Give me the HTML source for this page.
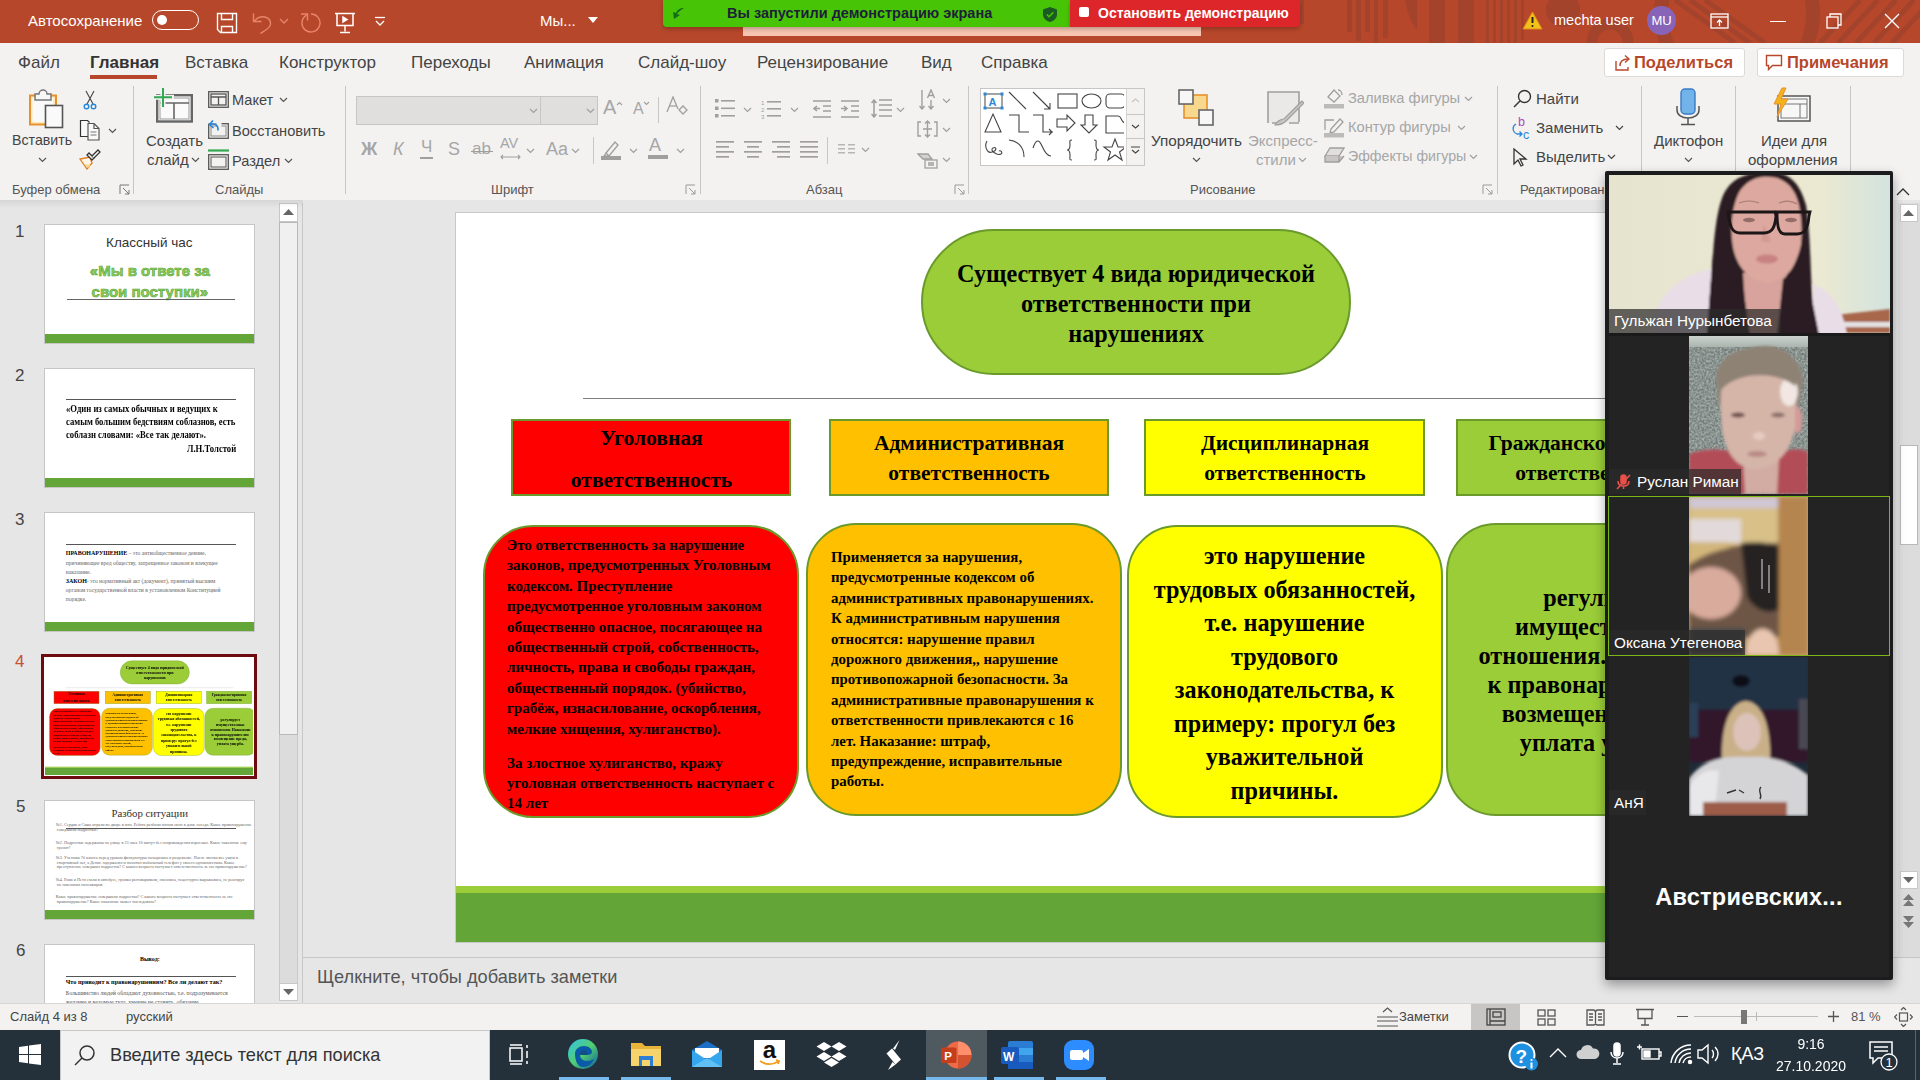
<!DOCTYPE html>
<html><head><meta charset="utf-8">
<style>
*{margin:0;padding:0;box-sizing:border-box}
html,body{width:1920px;height:1080px;overflow:hidden;background:#e6e6e6;font-family:"Liberation Sans",sans-serif;color:#444}
.a{position:absolute}
.ser{font-family:"Liberation Serif",serif;font-weight:bold;color:#000}
#title{left:0;top:0;width:1920px;height:43px;background:#b7472a;color:#fff}
#tabs{left:0;top:43px;width:1920px;height:39px;background:#f3f2f1}
#ribbon{left:0;top:82px;width:1920px;height:118px;background:#f3f2f1}
.tab{position:absolute;top:53px;font-size:17px;color:#444;white-space:nowrap}
.rt{position:absolute;font-size:15px;color:#444;white-space:nowrap}
.gl{position:absolute;top:182px;font-size:13px;color:#555;white-space:nowrap}
.sep{position:absolute;top:86px;width:1px;height:108px;background:#c8c6c4}
.dis{color:#a6a6a6}
</style></head><body>
<!-- TITLE BAR -->
<div id="title" class="a">
  <svg class="a" style="left:1290px;top:0" width="630" height="43" viewBox="0 0 630 43">
    <g fill="#a4432c">
      <rect x="10" y="0" width="4" height="24"/>
      <rect x="57" y="0" width="5" height="32"/><rect x="66" y="0" width="5" height="41"/><rect x="75" y="0" width="5" height="32"/><rect x="84" y="0" width="4" height="43"/><rect x="93" y="0" width="5" height="38"/>
      <path d="M115 0h12v30c-6-8-10-18-12-30z"/>
      <rect x="139" y="0" width="16" height="43"/><rect x="168" y="0" width="16" height="43"/>
      <rect x="196" y="0" width="3" height="43"/><rect x="203" y="0" width="3" height="43"/><rect x="210" y="0" width="3" height="43"/><rect x="217" y="0" width="3" height="43"/><rect x="224" y="0" width="3" height="43"/><rect x="231" y="0" width="3" height="40"/>
      <circle cx="273" cy="10" r="17"/>
    </g>
    <g fill="none" stroke="#a4432c">
      <circle cx="320" cy="42" r="18" stroke-width="11"/>
      <circle cx="447" cy="14" r="76" stroke-width="14"/>
      <path d="M385 0l60 43M400 0l60 43M415 0l60 43" stroke-width="5"/>
      <path d="M530 43l40-43M548 43l40-43M566 43l40-43M584 43l40-43M602 43l30-32" stroke-width="5"/>
    </g>
  </svg>
  <div class="a" style="left:28px;top:12px;font-size:15px;color:#fff">Автосохранение</div>
  <div class="a" style="left:152px;top:10px;width:47px;height:20px;border:1.3px solid #fff;border-radius:10px"></div>
  <div class="a" style="left:156.5px;top:15px;width:10px;height:10px;border-radius:50%;background:#fff"></div>
  <svg class="a" style="left:216px;top:12px" width="22" height="22" viewBox="0 0 22 22" fill="none" stroke="#fff" stroke-width="1.4"><path d="M1.5 1.5h19v19h-16l-3-3z"/><path d="M5.5 1.5v6h11v-6"/><path d="M5.5 20.5v-6h11v6"/></svg>
  <svg class="a" style="left:252px;top:12px" width="22" height="22" viewBox="0 0 22 22" fill="none" stroke="#e7866d" stroke-width="1.4"><path d="M1.5 1.5v8h8"/><path d="M2 9.5C8 2 19 4 18.5 12.5C18 16 14 18 8.5 21.5"/></svg>
  <svg class="a" style="left:279px;top:18px" width="10" height="7" viewBox="0 0 10 7" fill="none" stroke="#e7866d" stroke-width="1.3"><path d="M1 1l4 4 4-4"/></svg>
  <svg class="a" style="left:299px;top:12px" width="22" height="22" viewBox="0 0 22 22" fill="none" stroke="#e7866d" stroke-width="1.4"><path d="M2 2h6.5v6.5"/><path d="M7.5 3.2A9 9 0 1 0 12 2"/></svg>
  <svg class="a" style="left:334px;top:12px" width="22" height="22" viewBox="0 0 22 22" fill="none" stroke="#fff" stroke-width="1.5"><path d="M1 1.5h20"/><path d="M3 1.5v12h16v-12"/><path d="M11 13.5v6"/><path d="M6 20.5h10"/><path d="M9 5v5l4-2.5z" fill="#fff"/></svg>
  <svg class="a" style="left:373px;top:16px" width="14" height="12" viewBox="0 0 14 12" fill="none" stroke="#fff" stroke-width="1.3"><path d="M2 1.5h10"/><path d="M3 5l4 4 4-4"/></svg>
  <div class="a" style="left:540px;top:12px;font-size:15px;color:#fff">Мы...</div>
  <svg class="a" style="left:588px;top:17px" width="10" height="6"><path d="M0 0h10l-5 6z" fill="#fff"/></svg>
  <div class="a" style="left:743px;top:25px;width:458px;height:11px;background:#f7c6b2"></div>
  <div class="a" style="left:663px;top:0;width:407px;height:27px;background:#48c406;border-radius:0 0 0 4px;box-shadow:0 2px 4px rgba(0,0,0,.25)"></div>
  <svg class="a" style="left:671px;top:7px" width="14" height="13" viewBox="0 0 14 13"><path d="M13 1c-4 0-7 2-8 5l-3-1 1 7 6-4-3-1c1-2 4-4 7-6z" fill="#146c1a"/></svg>
  <div class="a" style="left:727px;top:5px;font-size:14.5px;font-weight:bold;color:#1d1f3a">Вы запустили демонстрацию экрана</div>
  <svg class="a" style="left:1043px;top:7px" width="14" height="15" viewBox="0 0 14 15"><path d="M7 0l7 2.5v5c0 3.5-3 6.5-7 7.5-4-1-7-4-7-7.5v-5z" fill="#1b5a22"/><path d="M3.8 7.5l2.2 2.2 4.3-4.3" stroke="#48c406" stroke-width="1.5" fill="none"/></svg>
  <div class="a" style="left:1070px;top:0;width:230px;height:27px;background:#dc2629;border-radius:0 0 4px 0;box-shadow:0 2px 4px rgba(0,0,0,.25)"></div>
  <div class="a" style="left:1079px;top:7px;width:10px;height:10px;background:#fff;border-radius:2px"></div>
  <div class="a" style="left:1098px;top:5px;font-size:14px;font-weight:bold;color:#fff">Остановить демонстрацию</div>
  <svg class="a" style="left:1522px;top:11px" width="21" height="19" viewBox="0 0 21 19"><path d="M10.5 1l9.5 17h-19z" fill="#f2c11a" stroke="#e38a1c" stroke-width="1"/><path d="M10.5 6v6" stroke="#222" stroke-width="2"/><circle cx="10.5" cy="15" r="1.1" fill="#222"/></svg>
  <div class="a" style="left:1554px;top:12px;font-size:14.5px;color:#fff">mechta user</div>
  <div class="a" style="left:1647px;top:6px;width:29px;height:29px;border-radius:50%;background:#8764b8;color:#fff;font-size:13px;line-height:29px;text-align:center">MU</div>
  <svg class="a" style="left:1710px;top:13px" width="19" height="16" viewBox="0 0 19 16" fill="none" stroke="#fff" stroke-width="1.3"><rect x="1" y="1" width="17" height="14"/><path d="M1 4h17"/><path d="M9.5 13V7M7 9.5l2.5-2.5 2.5 2.5"/></svg>
  <div class="a" style="left:1770px;top:21px;width:16px;height:1.3px;background:#fff"></div>
  <svg class="a" style="left:1826px;top:13px" width="16" height="16" viewBox="0 0 16 16" fill="none" stroke="#fff" stroke-width="1.3"><rect x="1" y="4" width="11" height="11"/><path d="M4 4V1h11v11h-3"/></svg>
  <svg class="a" style="left:1884px;top:13px" width="16" height="16" viewBox="0 0 16 16" stroke="#fff" stroke-width="1.4"><path d="M1 1l14 14M15 1L1 15"/></svg>
</div>
<!-- TABS -->
<div id="tabs" class="a"></div>
<div class="tab" style="left:18px">Файл</div>
<div class="tab" style="left:90px;font-weight:bold;color:#333">Главная</div>
<div class="a" style="left:90px;top:75px;width:67px;height:4px;background:#b7472a"></div>
<div class="tab" style="left:185px">Вставка</div>
<div class="tab" style="left:279px">Конструктор</div>
<div class="tab" style="left:411px">Переходы</div>
<div class="tab" style="left:524px">Анимация</div>
<div class="tab" style="left:638px">Слайд-шоу</div>
<div class="tab" style="left:757px">Рецензирование</div>
<div class="tab" style="left:921px">Вид</div>
<div class="tab" style="left:981px">Справка</div>
<!-- RIBBON -->
<div id="ribbon" class="a"></div>
<!-- RIBBON CONTENT -->
<div id="rb" class="a" style="left:0;top:0;width:1920px;height:200px">
<!-- share / comments -->
<div class="a" style="left:1604px;top:48px;width:141px;height:29px;background:#fff;border:1px solid #dcdad8;border-radius:3px"></div>
<svg class="a" style="left:1613px;top:53px" width="19" height="19" viewBox="0 0 19 19" fill="none" stroke="#b7472a" stroke-width="1.4"><path d="M3 8v9h12v-3"/><path d="M7 13c0-5 3-7 8-7"/><path d="M12 2.5l4 3.5-4 3.5"/></svg>
<div class="a" style="left:1634px;top:52.5px;font-size:16.5px;font-weight:bold;color:#b7472a">Поделиться</div>
<div class="a" style="left:1757px;top:48px;width:147px;height:29px;background:#fff;border:1px solid #dcdad8;border-radius:3px"></div>
<svg class="a" style="left:1765px;top:54px" width="18" height="17" viewBox="0 0 18 17" fill="none" stroke="#b7472a" stroke-width="1.4"><path d="M1.5 1.5h15v10h-9l-4 4v-4h-2z"/></svg>
<div class="a" style="left:1787px;top:52.5px;font-size:16.5px;font-weight:bold;color:#b7472a">Примечания</div>

<!-- separators -->
<div class="sep" style="left:133px"></div>
<div class="sep" style="left:345px"></div>
<div class="sep" style="left:700px"></div>
<div class="sep" style="left:968px"></div>
<div class="sep" style="left:1497px"></div>
<div class="sep" style="left:1641px"></div>
<div class="sep" style="left:1735px"></div>
<div class="sep" style="left:1850px"></div>

<!-- group labels -->
<div class="gl" style="left:12px">Буфер обмена</div>
<div class="gl" style="left:215px">Слайды</div>
<div class="gl" style="left:491px">Шрифт</div>
<div class="gl" style="left:806px">Абзац</div>
<div class="gl" style="left:1190px">Рисование</div>
<div class="gl" style="left:1520px">Редактирование</div>
<!-- dialog launchers -->
<svg class="a" style="left:119px;top:184px" width="11" height="11" viewBox="0 0 11 11" fill="none" stroke="#777" stroke-width="1"><path d="M1 10V1h9"/><path d="M4 4l6 6M10 6v4H6"/></svg>
<svg class="a" style="left:685px;top:184px" width="11" height="11" viewBox="0 0 11 11" fill="none" stroke="#999" stroke-width="1"><path d="M1 10V1h9"/><path d="M4 4l6 6M10 6v4H6"/></svg>
<svg class="a" style="left:954px;top:184px" width="11" height="11" viewBox="0 0 11 11" fill="none" stroke="#999" stroke-width="1"><path d="M1 10V1h9"/><path d="M4 4l6 6M10 6v4H6"/></svg>
<svg class="a" style="left:1482px;top:184px" width="11" height="11" viewBox="0 0 11 11" fill="none" stroke="#999" stroke-width="1"><path d="M1 10V1h9"/><path d="M4 4l6 6M10 6v4H6"/></svg>

<!-- CLIPBOARD -->
<svg class="a" style="left:28px;top:89px" width="37" height="41" viewBox="0 0 37 41">
  <rect x="2" y="6.5" width="26" height="29" fill="#fde8b4" stroke="#e8912c" stroke-width="2"/>
  <rect x="4.5" y="8.5" width="21" height="24.5" fill="#f9f9f9"/>
  <path d="M7 11V5h4a4 4 0 0 1 8 0h4v6z" fill="#f7f7f7" stroke="#777" stroke-width="1.5"/>
  <rect x="17.5" y="16.5" width="17" height="22" fill="#fafafa" stroke="#555" stroke-width="1.6"/>
</svg>
<div class="rt" style="left:12px;top:132px;font-size:14.2px">Вставить</div>
<svg class="a" style="left:38px;top:157px" width="9" height="6" viewBox="0 0 9 6" fill="none" stroke="#555" stroke-width="1.2"><path d="M1 1l3.5 3.5L8 1"/></svg>
<svg class="a" style="left:83px;top:90px" width="14" height="20" viewBox="0 0 14 20" fill="none"><path d="M3 1l7 13M11 1L4 14" stroke="#444" stroke-width="1.1"/><circle cx="3.5" cy="16.5" r="2.3" stroke="#2b88d8" stroke-width="1.4"/><circle cx="10.5" cy="16.5" r="2.3" stroke="#2b88d8" stroke-width="1.4"/></svg>
<svg class="a" style="left:79px;top:119px" width="22" height="22" viewBox="0 0 22 22" fill="#f9f9f9" stroke="#333" stroke-width="1.2"><path d="M9 17.5H1.5v-16h7l2 2"/><path d="M9 4.5h6l5 5v11.5H9z" stroke="#555"/><path d="M15 4.5v5h5" fill="none" stroke="#555"/><path d="M11.5 13h6M11.5 16h6" stroke="#777"/></svg>
<svg class="a" style="left:108px;top:128px" width="9" height="6" viewBox="0 0 9 6" fill="none" stroke="#555" stroke-width="1.2"><path d="M1 1l3.5 3.5L8 1"/></svg>
<svg class="a" style="left:79px;top:149px" width="22" height="21" viewBox="0 0 22 21"><path d="M1 10l7 10 5-6-2-6z" fill="#fdf4e6" stroke="#e07b1f" stroke-width="1.3"/><path d="M5 15l4 4 3-3z" fill="#f8d88c"/><path d="M8 6l5 5 2-2-5-5z" fill="#f9f9f9" stroke="#333" stroke-width="1.3"/><path d="M13 7l6-6 2 2-6 6" fill="#f9f9f9" stroke="#333" stroke-width="1.3"/></svg>

<!-- SLIDES -->
<svg class="a" style="left:153px;top:87px" width="40" height="36" viewBox="0 0 40 36" fill="none">
  <rect x="4.2" y="8.2" width="34.6" height="26.3" stroke="#666" stroke-width="2.4" fill="#fafafa"/>
  <rect x="7" y="11" width="29" height="21" stroke="#999" stroke-width="1" fill="none"/>
  <path d="M7 16h29M21 16v16" stroke="#666" stroke-width="1.6"/>
  <path d="M10 -1v22M-1 10.3h22" stroke="#f3f2f1" stroke-width="5"/>
  <path d="M10 1v19M1 10.3h18" stroke="#33a853" stroke-width="2"/>
</svg>
<div class="rt" style="left:146px;top:132px">Создать</div>
<div class="rt" style="left:147px;top:151px">слайд</div>
<svg class="a" style="left:191px;top:157px" width="9" height="6" viewBox="0 0 9 6" fill="none" stroke="#555" stroke-width="1.2"><path d="M1 1l3.5 3.5L8 1"/></svg>
<svg class="a" style="left:208px;top:91px" width="21" height="17" viewBox="0 0 21 17" fill="none" stroke="#555" stroke-width="1.3"><rect x="0.7" y="0.7" width="19.6" height="15.6"/><rect x="3" y="3" width="15" height="11"/><path d="M3 6h15M10.5 6v8"/></svg>
<div class="rt" style="left:232px;top:92px;font-size:14.6px">Макет</div>
<svg class="a" style="left:279px;top:97px" width="9" height="6" viewBox="0 0 9 6" fill="none" stroke="#555" stroke-width="1.2"><path d="M1 1l3.5 3.5L8 1"/></svg>
<svg class="a" style="left:208px;top:119px" width="21" height="20" viewBox="0 0 21 20" fill="none"><rect x="0.7" y="4.7" width="19.6" height="14.6" stroke="#555" stroke-width="1.3"/><rect x="3" y="7" width="15" height="10" stroke="#888" stroke-width="1"/><path d="M-1 2h12v9" stroke="#f3f2f1" stroke-width="5"/><path d="M10 11.5C10.5 6 7 4 2 5.5" stroke="#2b88d8" stroke-width="1.6"/><path d="M5 1.5L1.5 5.5 5.5 9" stroke="#2b88d8" stroke-width="1.6"/></svg>
<div class="rt" style="left:232px;top:122.5px;font-size:14.6px">Восстановить</div>
<svg class="a" style="left:208px;top:149px" width="21" height="21" viewBox="0 0 21 21" fill="none"><path d="M0 1.5h21" stroke="#33a853" stroke-width="2.2"/><rect x="0.7" y="5.7" width="19.6" height="14.6" stroke="#555" stroke-width="1.3"/><rect x="3" y="8" width="15" height="10" stroke="#555" stroke-width="1"/></svg>
<div class="rt" style="left:232px;top:152.5px;font-size:14.6px">Раздел</div>
<svg class="a" style="left:284px;top:158px" width="9" height="6" viewBox="0 0 9 6" fill="none" stroke="#555" stroke-width="1.2"><path d="M1 1l3.5 3.5L8 1"/></svg>

<!-- FONT -->
<div class="a" style="left:356px;top:96px;width:242px;height:29px;background:#e1dfdd;border:1px solid #c8c6c4"></div>
<div class="a" style="left:540px;top:97px;width:1px;height:27px;background:#c8c6c4"></div>
<svg class="a" style="left:529px;top:108px" width="9" height="6" viewBox="0 0 9 6" fill="none" stroke="#a19f9d" stroke-width="1.2"><path d="M1 1l3.5 3.5L8 1"/></svg>
<svg class="a" style="left:586px;top:108px" width="9" height="6" viewBox="0 0 9 6" fill="none" stroke="#a19f9d" stroke-width="1.2"><path d="M1 1l3.5 3.5L8 1"/></svg>
<g></g>
<div class="a dis" style="left:603px;top:96px;font-size:20px">A</div>
<svg class="a" style="left:616px;top:101px" width="7" height="5" viewBox="0 0 7 5" fill="none" stroke="#a19f9d" stroke-width="1.1"><path d="M1 4l2.5-2.5L6 4"/></svg>
<div class="a dis" style="left:633px;top:100px;font-size:16px">A</div>
<svg class="a" style="left:643px;top:101px" width="7" height="5" viewBox="0 0 7 5" fill="none" stroke="#a19f9d" stroke-width="1.1"><path d="M1 1l2.5 2.5L6 1"/></svg>
<div class="a" style="left:658px;top:97px;width:1px;height:26px;background:#c8c6c4"></div>
<svg class="a" style="left:666px;top:96px" width="22" height="22" viewBox="0 0 22 22" fill="none" stroke="#a19f9d" stroke-width="1.3"><path d="M1 16L7 1l5 12"/><path d="M3.5 10h7"/><path d="M13 14l4-4 4 4-4 4z"/></svg>
<div class="a dis" style="left:361px;top:139px;font-size:18px;font-weight:bold">Ж</div>
<div class="a dis" style="left:393px;top:139px;font-size:18px;font-style:italic">К</div>
<div class="a dis" style="left:421px;top:137px;font-size:17px">Ч</div>
<div class="a" style="left:420px;top:157px;width:13px;height:1.5px;background:#a19f9d"></div>
<div class="a dis" style="left:448px;top:139px;font-size:18px">S</div>
<div class="a dis" style="left:472px;top:139px;font-size:17px">ab</div>
<div class="a" style="left:471px;top:151px;width:22px;height:1.3px;background:#a19f9d"></div>
<div class="a dis" style="left:500px;top:135px;font-size:14.5px">AV</div>
<svg class="a" style="left:500px;top:154px" width="21" height="6" viewBox="0 0 21 6" fill="none" stroke="#a19f9d" stroke-width="1.1"><path d="M1 3h19M3 1L1 3l2 2M18 1l2 2-2 2"/></svg>
<svg class="a" style="left:526px;top:148px" width="9" height="6" viewBox="0 0 9 6" fill="none" stroke="#a19f9d" stroke-width="1.2"><path d="M1 1l3.5 3.5L8 1"/></svg>
<div class="a dis" style="left:546px;top:139px;font-size:18px">Aa</div>
<svg class="a" style="left:571px;top:148px" width="9" height="6" viewBox="0 0 9 6" fill="none" stroke="#a19f9d" stroke-width="1.2"><path d="M1 1l3.5 3.5L8 1"/></svg>
<div class="a" style="left:593px;top:137px;width:1px;height:27px;background:#c8c6c4"></div>
<svg class="a" style="left:601px;top:139px" width="21" height="22" viewBox="0 0 21 22" fill="none" stroke="#a19f9d" stroke-width="1.3"><path d="M5 14l9-11 3 3-9 11z"/><path d="M5 14l-2 3h5"/><rect x="0" y="17" width="20" height="4" fill="#a19f9d" stroke="none"/></svg>
<svg class="a" style="left:629px;top:148px" width="9" height="6" viewBox="0 0 9 6" fill="none" stroke="#a19f9d" stroke-width="1.2"><path d="M1 1l3.5 3.5L8 1"/></svg>
<div class="a dis" style="left:649px;top:135px;font-size:18px">A</div>
<div class="a" style="left:648px;top:155px;width:20px;height:4px;background:#a19f9d"></div>
<svg class="a" style="left:676px;top:148px" width="9" height="6" viewBox="0 0 9 6" fill="none" stroke="#a19f9d" stroke-width="1.2"><path d="M1 1l3.5 3.5L8 1"/></svg>

<!-- PARAGRAPH -->
<svg class="a" style="left:715px;top:99px" width="20" height="19" viewBox="0 0 20 19" fill="#a19f9d"><rect x="0" y="0" width="3.5" height="3.5"/><rect x="0" y="7.5" width="3.5" height="3.5"/><rect x="0" y="15" width="3.5" height="3.5"/><rect x="6" y="1" width="14" height="1.6"/><rect x="6" y="8.5" width="14" height="1.6"/><rect x="6" y="16" width="14" height="1.6"/></svg>
<svg class="a" style="left:743px;top:107px" width="9" height="6" viewBox="0 0 9 6" fill="none" stroke="#a19f9d" stroke-width="1.2"><path d="M1 1l3.5 3.5L8 1"/></svg>
<svg class="a" style="left:761px;top:99px" width="21" height="20" viewBox="0 0 21 20" fill="#a19f9d"><text x="0" y="5.5" font-size="6" font-family="Liberation Sans">1</text><text x="0" y="12.5" font-size="6" font-family="Liberation Sans">2</text><text x="0" y="19.5" font-size="6" font-family="Liberation Sans">3</text><rect x="6" y="2" width="14" height="1.6"/><rect x="6" y="9" width="14" height="1.6"/><rect x="6" y="16" width="14" height="1.6"/></svg>
<svg class="a" style="left:790px;top:107px" width="9" height="6" viewBox="0 0 9 6" fill="none" stroke="#a19f9d" stroke-width="1.2"><path d="M1 1l3.5 3.5L8 1"/></svg>
<svg class="a" style="left:813px;top:100px" width="19" height="18" viewBox="0 0 19 18" fill="none" stroke="#a19f9d" stroke-width="1.6"><path d="M0 1h18M10 6h8M10 11h8M0 17h18M7 8.5H1M4 6L1 8.5 4 11"/></svg>
<svg class="a" style="left:841px;top:100px" width="19" height="18" viewBox="0 0 19 18" fill="none" stroke="#a19f9d" stroke-width="1.6"><path d="M0 1h18M10 6h8M10 11h8M0 17h18M0 8.5h6M3 6l3 2.5L3 11"/></svg>
<svg class="a" style="left:871px;top:99px" width="21" height="19" viewBox="0 0 21 19" fill="none" stroke="#a19f9d" stroke-width="1.5"><path d="M8 1h13M8 6h13M8 11h13M8 17h13M3 1v17M0.5 4L3 1l2.5 3M0.5 15L3 18l2.5-3"/></svg>
<svg class="a" style="left:896px;top:107px" width="9" height="6" viewBox="0 0 9 6" fill="none" stroke="#a19f9d" stroke-width="1.2"><path d="M1 1l3.5 3.5L8 1"/></svg>
<svg class="a" style="left:919px;top:89px" width="19" height="21" viewBox="0 0 19 21" fill="none" stroke="#a19f9d" stroke-width="1.4"><path d="M3 1v19M0.5 17L3 20l2.5-3M12 11v9M9.5 17l2.5 3 2.5-3M8.5 9L12 1l3.5 8M9.5 6.5h5"/></svg>
<svg class="a" style="left:942px;top:98px" width="9" height="6" viewBox="0 0 9 6" fill="none" stroke="#a19f9d" stroke-width="1.2"><path d="M1 1l3.5 3.5L8 1"/></svg>
<svg class="a" style="left:917px;top:120px" width="21" height="18" viewBox="0 0 21 18" fill="none" stroke="#a19f9d" stroke-width="1.4"><path d="M4 2H1v14h3M17 2h3v14h-3M10.5 1v16M8 3.5l2.5-2.5L13 3.5M8 14.5l2.5 2.5 2.5-2.5M6 9h9"/></svg>
<svg class="a" style="left:942px;top:127px" width="9" height="6" viewBox="0 0 9 6" fill="none" stroke="#a19f9d" stroke-width="1.2"><path d="M1 1l3.5 3.5L8 1"/></svg>
<svg class="a" style="left:917px;top:152px" width="21" height="17" viewBox="0 0 21 17" fill="none" stroke="#a19f9d" stroke-width="1.3"><path d="M1 2h10l4 5H6z" fill="#d4d2d0"/><rect x="8" y="8" width="12" height="8" fill="#f3f2f1"/><path d="M11 11h6M11 13h6"/></svg>
<svg class="a" style="left:942px;top:157px" width="9" height="6" viewBox="0 0 9 6" fill="none" stroke="#a19f9d" stroke-width="1.2"><path d="M1 1l3.5 3.5L8 1"/></svg>
<svg class="a" style="left:716px;top:141px" width="103" height="17" viewBox="0 0 103 17" fill="#a19f9d">
  <rect x="0" y="0" width="18" height="1.7"/><rect x="0" y="5" width="13" height="1.7"/><rect x="0" y="10" width="18" height="1.7"/><rect x="0" y="15" width="13" height="1.7"/>
  <rect x="28" y="0" width="18" height="1.7"/><rect x="31" y="5" width="12" height="1.7"/><rect x="28" y="10" width="18" height="1.7"/><rect x="31" y="15" width="12" height="1.7"/>
  <rect x="56" y="0" width="18" height="1.7"/><rect x="61" y="5" width="13" height="1.7"/><rect x="56" y="10" width="18" height="1.7"/><rect x="61" y="15" width="13" height="1.7"/>
  <rect x="84" y="0" width="18" height="1.7"/><rect x="84" y="5" width="18" height="1.7"/><rect x="84" y="10" width="18" height="1.7"/><rect x="84" y="15" width="18" height="1.7"/>
</svg>
<div class="a" style="left:827px;top:137px;width:1px;height:27px;background:#c8c6c4"></div>
<svg class="a" style="left:838px;top:144px" width="17" height="10" viewBox="0 0 17 10" fill="#b8b6b4"><rect x="0" y="0" width="7" height="1.5"/><rect x="0" y="4" width="7" height="1.5"/><rect x="0" y="8" width="7" height="1.5"/><rect x="10" y="0" width="7" height="1.5"/><rect x="10" y="4" width="7" height="1.5"/><rect x="10" y="8" width="7" height="1.5"/></svg>
<svg class="a" style="left:861px;top:147px" width="9" height="6" viewBox="0 0 9 6" fill="none" stroke="#a19f9d" stroke-width="1.2"><path d="M1 1l3.5 3.5L8 1"/></svg>

<!-- DRAWING: shapes gallery -->
<div class="a" style="left:980px;top:88px;width:165px;height:78px;background:#fff;border:1px solid #c8c6c4"></div>
<div class="a" style="left:1126px;top:89px;width:1px;height:76px;background:#d8d6d4"></div>
<div class="a" style="left:1127px;top:114px;width:18px;height:1px;background:#d0cecc"></div>
<div class="a" style="left:1127px;top:138px;width:18px;height:1px;background:#d0cecc"></div>
<div class="a" style="left:1127px;top:89px;width:17px;height:76px;background:#f3f2f1"></div>
<div class="a" style="left:1126px;top:114px;width:19px;height:1.2px;background:#c8c6c4"></div>
<div class="a" style="left:1126px;top:138px;width:19px;height:1.2px;background:#c8c6c4"></div>
<svg class="a" style="left:1131px;top:98px" width="9" height="5" viewBox="0 0 9 5" fill="none" stroke="#c8c6c4" stroke-width="1.1"><path d="M1 4l3.5-3L8 4"/></svg>
<svg class="a" style="left:1131px;top:124px" width="9" height="5" viewBox="0 0 9 5" fill="none" stroke="#444" stroke-width="1.2"><path d="M1 1l3.5 3L8 1"/></svg>
<svg class="a" style="left:1131px;top:146px" width="9" height="9" viewBox="0 0 9 9" fill="none" stroke="#444" stroke-width="1.1"><path d="M0 1h9M1 4l3.5 3L8 4"/></svg>
<svg class="a" style="left:982px;top:90px" width="142" height="74" viewBox="0 0 142 74" fill="none" stroke="#444" stroke-width="1.1">
  <rect x="3" y="4" width="17" height="14" stroke="#666" stroke-width="1.2"/>
  <g fill="#2b88d8" stroke="none"><rect x="1.5" y="2.5" width="3" height="3"/><rect x="18.5" y="2.5" width="3" height="3"/><rect x="1.5" y="16.5" width="3" height="3"/><rect x="18.5" y="16.5" width="3" height="3"/></g>
  <text x="6.5" y="16" font-size="11" font-weight="bold" fill="#2b88d8" stroke="none" font-family="Liberation Sans">A</text>
  <path d="M27 2l17 17"/>
  <path d="M51 2l17 17M62 19h6v-6"/>
  <rect x="76" y="4" width="19" height="14"/>
  <ellipse cx="109.5" cy="11" rx="9.5" ry="7"/>
  <rect x="124" y="4" width="19" height="14" rx="4"/>
  <path d="M3 42l8-18 8 18z"/>
  <path d="M27 25h10v17h10"/>
  <path d="M51 25h10v17h10M67 39l3 3-3 3"/>
  <path d="M75 29h10v-4l8 8-8 8v-4H75z"/>
  <path d="M103 25h8v10h4l-8 8-8-8h4z"/>
  <path d="M124 26h12c4 0 2 5 7 7v10h-19z" stroke-linejoin="round"/>
  <path d="M5 51c-3 5 0 13 5 11 5-1 5-6 1-4-4 2 4 8 8 6 2-1 0-4-2-3" />
  <path d="M27 50c9 1 15 7 15 17"/>
  <path d="M51 58c3-9 6-9 9-2s6 10 9 10"/>
  <path d="M90 50c-3 0-2 1-2 5s-1 5-3 5c2 0 3 1 3 5s-1 5 2 5"/>
  <path d="M112 50c3 0 2 1 2 5s1 5 3 5c-2 0-3 1-3 5s1 5-2 5"/>
  <path d="M133 49l3 8h8l-6.5 5 2.5 8-7-5-7 5 2.5-8-6.5-5h8z"/>
</svg>
<!-- arrange -->
<svg class="a" style="left:1178px;top:89px" width="37" height="38" viewBox="0 0 37 38"><rect x="6" y="6" width="23" height="23" fill="#f8d88c" stroke="#e8912c" stroke-width="1.6"/><rect x="1" y="1" width="14" height="14" fill="#f7f7f7" stroke="#666" stroke-width="1.6"/><rect x="21" y="21" width="14" height="15" fill="#f7f7f7" stroke="#666" stroke-width="1.6"/></svg>
<div class="rt" style="left:1151px;top:132px;font-size:15.3px">Упорядочить</div>
<svg class="a" style="left:1192px;top:157px" width="9" height="6" viewBox="0 0 9 6" fill="none" stroke="#555" stroke-width="1.2"><path d="M1 1l3.5 3.5L8 1"/></svg>
<svg class="a" style="left:1264px;top:89px" width="40" height="40" viewBox="0 0 40 40" fill="none"><path d="M4 34V3h31v30" stroke="#a19f9d" stroke-width="1.6" fill="#ebe9e7"/><path d="M8 34h4M25 34h10" stroke="#a19f9d" stroke-width="1.6"/><path d="M38 12L20 30c-3 0-8 3-9 6 4 0 9-2 11-4L40 14z" fill="#c8c6c4" stroke="#a19f9d" stroke-width="1.2"/></svg>
<div class="rt dis" style="left:1248px;top:132px;font-size:15px">Экспресс-</div>
<div class="rt dis" style="left:1256px;top:151px;font-size:15px">стили</div>
<svg class="a" style="left:1298px;top:157px" width="9" height="6" viewBox="0 0 9 6" fill="none" stroke="#a19f9d" stroke-width="1.2"><path d="M1 1l3.5 3.5L8 1"/></svg>
<svg class="a" style="left:1324px;top:88px" width="21" height="21" viewBox="0 0 21 21" fill="none" stroke="#a19f9d" stroke-width="1.3"><path d="M4 9l6-7 6 6-6 6z"/><path d="M14 2c3 0 4 3 4 5"/><rect x="0" y="16" width="20" height="4.5" fill="#bdbbb9" stroke="none"/></svg>
<div class="rt dis" style="left:1348px;top:90px;font-size:14.7px">Заливка фигуры</div>
<svg class="a" style="left:1464px;top:96px" width="9" height="6" viewBox="0 0 9 6" fill="none" stroke="#a19f9d" stroke-width="1.2"><path d="M1 1l3.5 3.5L8 1"/></svg>
<svg class="a" style="left:1324px;top:117px" width="21" height="21" viewBox="0 0 21 21" fill="none" stroke="#a19f9d" stroke-width="1.3"><path d="M1 13V3h9M7 12l9-10 3 3-9 10-4 1z"/><rect x="0" y="16" width="20" height="4.5" fill="#bdbbb9" stroke="none"/></svg>
<div class="rt dis" style="left:1348px;top:119px;font-size:14.7px">Контур фигуры</div>
<svg class="a" style="left:1457px;top:125px" width="9" height="6" viewBox="0 0 9 6" fill="none" stroke="#a19f9d" stroke-width="1.2"><path d="M1 1l3.5 3.5L8 1"/></svg>
<svg class="a" style="left:1324px;top:147px" width="21" height="18" viewBox="0 0 21 18" fill="none" stroke="#a19f9d" stroke-width="1.3"><path d="M1 9l5-8h14l-5 8z" fill="#e1dfdd"/><path d="M1 9v6h14l5-6M15 9v6" fill="#c8c6c4"/></svg>
<div class="rt dis" style="left:1348px;top:148px;font-size:14.2px">Эффекты фигуры</div>
<svg class="a" style="left:1469px;top:154px" width="9" height="6" viewBox="0 0 9 6" fill="none" stroke="#a19f9d" stroke-width="1.2"><path d="M1 1l3.5 3.5L8 1"/></svg>

<!-- EDITING -->
<svg class="a" style="left:1513px;top:89px" width="19" height="19" viewBox="0 0 19 19" fill="none" stroke="#333" stroke-width="1.4"><circle cx="11.5" cy="7.5" r="6"/><path d="M7 12l-6 6"/></svg>
<div class="rt" style="left:1536px;top:90px;font-size:15px;color:#444">Найти</div>
<svg class="a" style="left:1511px;top:116px" width="21" height="23" viewBox="0 0 21 23" fill="none"><text x="7" y="10" font-size="12.5" fill="#b146c2" font-family="Liberation Sans">b</text><text x="12" y="22.5" font-size="12.5" fill="#2b88d8" font-family="Liberation Sans">c</text><path d="M5 8c-4 2-4 8 1 10h5M8.5 15.5L11 18l-2.5 2.5" stroke="#2b88d8" stroke-width="1.3"/></svg>
<div class="rt" style="left:1536px;top:119px;font-size:15px;color:#444">Заменить</div>
<svg class="a" style="left:1615px;top:125px" width="9" height="6" viewBox="0 0 9 6" fill="none" stroke="#444" stroke-width="1.2"><path d="M1 1l3.5 3.5L8 1"/></svg>
<svg class="a" style="left:1513px;top:148px" width="15" height="19" viewBox="0 0 15 19" fill="none" stroke="#333" stroke-width="1.3"><path d="M1 1v15l4-4 3 6 2-1-3-6h6z"/></svg>
<div class="rt" style="left:1536px;top:148px;font-size:15px;color:#444">Выделить</div>
<svg class="a" style="left:1607px;top:154px" width="9" height="6" viewBox="0 0 9 6" fill="none" stroke="#444" stroke-width="1.2"><path d="M1 1l3.5 3.5L8 1"/></svg>

<!-- VOICE -->
<svg class="a" style="left:1675px;top:88px" width="26" height="38" viewBox="0 0 26 38" fill="none"><rect x="6" y="1" width="14" height="25" rx="4" fill="#72b4ea" stroke="#3a7bc4" stroke-width="1.4"/><path d="M2 18v4c0 5 5 8 11 8s11-3 11-8v-4M13 30v6M6 36.5h14" stroke="#555" stroke-width="1.5"/></svg>
<div class="rt" style="left:1654px;top:132px;font-size:15px">Диктофон</div>
<svg class="a" style="left:1684px;top:157px" width="9" height="6" viewBox="0 0 9 6" fill="none" stroke="#555" stroke-width="1.2"><path d="M1 1l3.5 3.5L8 1"/></svg>
<!-- DESIGNER -->
<svg class="a" style="left:1772px;top:87px" width="40" height="36" viewBox="0 0 40 36" fill="none"><rect x="6" y="9" width="32" height="25" stroke="#555" stroke-width="1.5" fill="#f7f7f7"/><rect x="9" y="12" width="26" height="19" stroke="#777" stroke-width="1"/><path d="M9 17h26M28 17v14" stroke="#777" stroke-width="1"/><path d="M10 1L2 17h7l-4 13L16 12H9l5-11z" fill="#f5b31a" stroke="#e8912c" stroke-width="1"/></svg>
<div class="rt" style="left:1761px;top:132px;font-size:15px">Идеи для</div>
<div class="rt" style="left:1748px;top:151px;font-size:15px">оформления</div>
<svg class="a" style="left:1896px;top:188px" width="14" height="8" viewBox="0 0 14 8" fill="none" stroke="#333" stroke-width="1.3"><path d="M1 7l6-6 6 6"/></svg>
</div>


<!-- LEFT PANE -->
<div id="pane" class="a" style="left:0;top:200px;width:303px;height:803px;background:#e6e6e6"></div>
<!-- PANE CONTENT -->
<div class="a" style="left:15px;top:222px;font-size:17px;color:#444">1</div>
<div class="a" style="left:15px;top:366px;font-size:17px;color:#444">2</div>
<div class="a" style="left:15px;top:510px;font-size:17px;color:#444">3</div>
<div class="a" style="left:15px;top:652px;font-size:17px;color:#c9502e">4</div>
<div class="a" style="left:16px;top:797px;font-size:17px;color:#444">5</div>
<div class="a" style="left:16px;top:941px;font-size:17px;color:#444">6</div>
<!-- thumb1 -->
<div class="a" style="left:44.8px;top:225.4px;width:208.8px;height:117.4px;background:#fff;outline:1px solid #c6c6c6;overflow:hidden">
  <div class="a" style="left:0;top:10px;width:209px;text-align:center;font-size:13.5px;color:#333">Классный час</div>
  <div class="a" style="left:0;top:35px;width:210px;text-align:center;font-size:15px;font-weight:bold;color:#8ccf5a;-webkit-text-stroke:0.6px #5aa53a;line-height:21px">«Мы в ответе за<br>свои поступки»</div>
  <div class="a" style="left:22px;top:74px;width:168px;height:1px;background:#666"></div>
  <div class="a" style="left:0;top:109px;width:210px;height:9px;background:#63a537"></div>
</div>
<!-- thumb2 -->
<div class="a" style="left:44.8px;top:369.4px;width:208.8px;height:117.4px;background:#fff;outline:1px solid #c6c6c6;overflow:hidden">
  <div class="a" style="left:21px;top:30px;width:170px;height:1px;background:#555"></div>
  <div class="a ser" style="left:21px;top:34px;font-size:9.6px;line-height:12.8px;white-space:nowrap;transform:scaleX(0.9);transform-origin:0 0">«Один из самых обычных и ведущих к<br>самым большим бедствиям соблазнов, есть<br>соблазн словами: «Все так делают».</div>
  <div class="a ser" style="left:142px;top:74px;font-size:9.6px;white-space:nowrap;transform:scaleX(0.9);transform-origin:0 0">Л.Н.Толстой</div>
  <div class="a" style="left:0;top:109px;width:210px;height:9px;background:#63a537"></div>
</div>
<!-- thumb3 -->
<div class="a" style="left:44.8px;top:513.4px;width:208.8px;height:117.4px;background:#fff;outline:1px solid #c6c6c6;overflow:hidden">
  <div class="a" style="left:21px;top:31px;width:170px;height:1px;background:#555"></div>
  <div class="a" style="left:21px;top:36px;font-family:'Liberation Serif',serif;font-size:5.6px;line-height:9.2px;color:#666;white-space:nowrap"><b style="color:#000;font-size:6px">ПРАВОНАРУШЕНИЕ</b> – это антиобщественное деяние,<br>причиняющее вред обществу, запрещенное законом и влекущее<br>наказание.<br><b style="color:#000;font-size:6px">ЗАКОН</b>- это нормативный акт (документ), принятый высшим<br>органом государственной власти в установленном Конституцией<br>порядке.</div>
  <div class="a" style="left:0;top:109px;width:210px;height:9px;background:#63a537"></div>
</div>
<!-- thumb4 selected -->
<div class="a" style="left:41px;top:654px;width:216px;height:125px;border:3px solid #6e0b0e;background:#fff"></div>
<div class="a" style="left:45px;top:658px;width:208px;height:117px;overflow:hidden;background:#fff">
  <div class="a" style="left:0;top:0;width:1288px;height:729px;transform:scale(0.16149);transform-origin:0 0">
  <div class="a" style="left:465px;top:16px;width:430px;height:146px;border-radius:73px;background:#9acd38;border:2px solid #6b9a2c"></div>
  <div class="a ser" style="left:465px;top:46px;width:430px;text-align:center;font-size:24.2px;line-height:30px">Существует 4 вида юридической<br>ответственности при<br>нарушениях</div>
  <div class="a" style="left:127px;top:184.5px;width:1040px;height:1.5px;background:#7f7f7f"></div>
  <div class="a" style="left:55px;top:206px;width:280px;height:77px;background:#ff0000;border:2px solid #6b9a2c"></div>
  <div class="a" style="left:372.5px;top:206px;width:280px;height:77px;background:#ffc000;border:2px solid #6b9a2c"></div>
  <div class="a" style="left:688px;top:206px;width:280.5px;height:77px;background:#ffff00;border:2px solid #6b9a2c"></div>
  <div class="a" style="left:999.5px;top:206px;width:280px;height:77px;background:#9acd38;border:2px solid #6b9a2c"></div>
  <div class="a ser" style="left:55px;top:204px;width:281px;text-align:center;font-size:21.5px;line-height:42px">Уголовная<br>ответственность</div>
  <div class="a ser" style="left:372.5px;top:215px;width:281px;text-align:center;font-size:21.5px;line-height:30px">Административная<br>ответственность</div>
  <div class="a ser" style="left:688.5px;top:215px;width:281px;text-align:center;font-size:21.5px;line-height:30px">Дисциплинарная<br>ответственность</div>
  <div class="a ser" style="left:999.5px;top:215px;width:281px;text-align:center;font-size:21.5px;line-height:30px">Гражданско-правовая<br>ответственность</div>
  <div class="a" style="left:26.5px;top:311.5px;width:316px;height:293px;border-radius:50px;background:#ff0000;border:2px solid #6b9a2c"></div>
  <div class="a" style="left:350px;top:309.5px;width:316px;height:293px;border-radius:50px;background:#ffc000;border:2px solid #6b9a2c"></div>
  <div class="a" style="left:670.5px;top:311.5px;width:316px;height:293px;border-radius:50px;background:#ffff00;border:2px solid #6b9a2c"></div>
  <div class="a" style="left:990px;top:309.5px;width:316px;height:293px;border-radius:50px;background:#9acd38;border:2px solid #6b9a2c"></div>
  <div class="a ser" style="left:51px;top:322px;width:290px;font-size:15px;line-height:20.4px;white-space:nowrap">Это ответственность за нарушение<br>законов, предусмотренных Уголовным<br>кодексом. Преступление<br>предусмотренное уголовным законом<br>общественно опасное, посягающее на<br>общественный строй, собственность,<br>личность, права и свободы граждан,<br>общественный порядок. (убийство,<br>грабёж, изнасилование, оскорбления,<br>мелкие хищения, хулиганство).<div style="height:13.6px"></div>За злостное хулиганство, кражу<br>уголовная ответственность наступает с<br>14 лет</div>
  <div class="a ser" style="left:375px;top:334px;width:290px;font-size:14.9px;line-height:20.4px;white-space:nowrap">Применяется за нарушения,<br>предусмотренные кодексом об<br>административных правонарушениях.<br>К административным нарушения<br>относятся: нарушение правил<br>дорожного движения,, нарушение<br>противопожарной безопасности. За<br>административные правонарушения к<br>ответственности привлекаются с 16<br>лет. Наказание: штраф,<br>предупреждение, исправительные<br>работы.</div>
  <div class="a ser" style="left:670.5px;top:326px;width:316px;text-align:center;font-size:24.2px;line-height:33.5px">это нарушение<br>трудовых обязанностей,<br>т.е. нарушение<br>трудового<br>законодательства, к<br>примеру: прогул без<br>уважительной<br>причины.</div>
  <div class="a ser" style="left:990px;top:370px;width:316px;text-align:center;font-size:24.2px;line-height:29px">регулирует<br>имущественные<br>отношения. Наказание<br>к правонарушителю:<br>возмещение вреда,<br>уплата ущерба.</div>
  <div class="a" style="left:0;top:673px;width:1288px;height:7px;background:#9acd38"></div>
  <div class="a" style="left:0;top:680px;width:1288px;height:49px;background:#63a537"></div></div>
</div>
<!-- thumb5 -->
<div class="a" style="left:44.8px;top:801.4px;width:208.8px;height:117.4px;background:#fff;outline:1px solid #c6c6c6;overflow:hidden">
  <div class="a" style="left:0;top:6px;width:210px;text-align:center;font-family:'Liberation Serif',serif;font-size:10.8px;color:#333">Разбор ситуации</div>
  <div class="a" style="left:21px;top:27px;width:170px;height:0.8px;background:#555"></div>
  <div class="a" style="left:11px;top:22px;font-family:'Liberation Serif',serif;font-size:4.2px;line-height:4.5px;color:#666;white-space:nowrap">№1. Сердик и Саша играли во дворе в мяч. Ребята разбили мячом окно в доме соседа. Какое правонарушение<br>&nbsp;совершили подростки?</div>
  <div class="a" style="left:11px;top:40px;font-family:'Liberation Serif',serif;font-size:4.2px;line-height:4.5px;color:#666;white-space:nowrap">№2. Подростки задержаны на улице в 23 часа 10 минут без сопровождения взрослых. Какое наказание ему<br>&nbsp;грозит?</div>
  <div class="a" style="left:11px;top:55px;font-family:'Liberation Serif',serif;font-size:4.2px;line-height:4.5px;color:#666;white-space:nowrap">№3. Ученики 7б класса перед уроком физкультуры находились в раздевалке. После звонка все ушли в<br>&nbsp;спортивный зал, а Денис задержался и похитил мобильный телефон у своего одноклассника. Какое<br>&nbsp;преступление совершил подросток? С какого возраста наступает ответственность за это правонарушение?</div>
  <div class="a" style="left:11px;top:77px;font-family:'Liberation Serif',serif;font-size:4.2px;line-height:4.5px;color:#666;white-space:nowrap">№4. Рома и Петя ехали в автобусе, громко разговаривали, смеялись, нецензурно выражались, не реагируя<br>&nbsp;на замечания пассажиров.</div>
  <div class="a" style="left:11px;top:94px;font-family:'Liberation Serif',serif;font-size:4.2px;line-height:4.5px;color:#666;white-space:nowrap">Какое правонарушение совершили подростки? С какого возраста наступает ответственность за это<br>&nbsp;правонарушение? Какое наказание может последовать?</div>
  <div class="a" style="left:0;top:109px;width:210px;height:9px;background:#63a537"></div>
</div>
<!-- thumb6 -->
<div class="a" style="left:44.8px;top:945.4px;width:208.8px;height:117.4px;background:#fff;outline:1px solid #c6c6c6;overflow:hidden">
  <div class="a ser" style="left:0;top:11px;width:210px;text-align:center;font-size:6px">Вывод:</div>
  <div class="a" style="left:21px;top:31px;width:170px;height:0.8px;background:#555"></div>
  <div class="a ser" style="left:21px;top:33px;font-size:6.2px;white-space:nowrap">Что приводит к правонарушениям? Все ли делают так?</div>
  <div class="a" style="left:21px;top:44px;font-family:'Liberation Serif',serif;font-size:5.8px;line-height:9px;color:#555;white-space:nowrap">Большинство людей обладают духовностью, т.е. подразумевается<br>желание и ведомые туда, умение не ставить, обязание</div>
</div>
<!-- pane scrollbar -->
<div class="a" style="left:279px;top:203px;width:19px;height:797px;background:#dcdcdc;border-left:1px solid #c8c8c8;border-right:1px solid #c8c8c8"></div>
<div class="a" style="left:279px;top:203px;width:19px;height:19px;background:#fff;border:1px solid #c8c8c8"></div>
<svg class="a" style="left:283px;top:209px" width="11" height="6"><path d="M0 6h11L5.5 0z" fill="#666"/></svg>
<div class="a" style="left:279px;top:222px;width:19px;height:513px;background:#f0f0f0;border:1px solid #b8b8b8"></div>
<div class="a" style="left:279px;top:983px;width:19px;height:18px;background:#fff;border:1px solid #c8c8c8"></div>
<svg class="a" style="left:283px;top:989px" width="11" height="6"><path d="M0 0h11L5.5 6z" fill="#666"/></svg>
<div class="a" style="left:302px;top:203px;width:1px;height:800px;background:#c8c8c8"></div>
<!-- ribbon shadow -->
<div class="a" style="left:0;top:200px;width:1920px;height:8px;background:linear-gradient(rgba(0,0,0,0.07),rgba(0,0,0,0))"></div>

<!-- MAIN -->
<div id="main" class="a" style="left:303px;top:200px;width:1617px;height:757px;background:#e6e6e6"></div>
<!-- SLIDE -->
<div id="slide" class="a" style="left:456px;top:213px;width:1288px;height:729px;background:#fff;outline:1px solid #c8c8c8;overflow:hidden">
  <div class="a" style="left:465px;top:16px;width:430px;height:146px;border-radius:73px;background:#9acd38;border:2px solid #6b9a2c"></div>
  <div class="a ser" style="left:465px;top:46px;width:430px;text-align:center;font-size:24.2px;line-height:30px">Существует 4 вида юридической<br>ответственности при<br>нарушениях</div>
  <div class="a" style="left:127px;top:184.5px;width:1040px;height:1.5px;background:#7f7f7f"></div>
  <div class="a" style="left:55px;top:206px;width:280px;height:77px;background:#ff0000;border:2px solid #6b9a2c"></div>
  <div class="a" style="left:372.5px;top:206px;width:280px;height:77px;background:#ffc000;border:2px solid #6b9a2c"></div>
  <div class="a" style="left:688px;top:206px;width:280.5px;height:77px;background:#ffff00;border:2px solid #6b9a2c"></div>
  <div class="a" style="left:999.5px;top:206px;width:280px;height:77px;background:#9acd38;border:2px solid #6b9a2c"></div>
  <div class="a ser" style="left:55px;top:204px;width:281px;text-align:center;font-size:21.5px;line-height:42px">Уголовная<br>ответственность</div>
  <div class="a ser" style="left:372.5px;top:215px;width:281px;text-align:center;font-size:21.5px;line-height:30px">Административная<br>ответственность</div>
  <div class="a ser" style="left:688.5px;top:215px;width:281px;text-align:center;font-size:21.5px;line-height:30px">Дисциплинарная<br>ответственность</div>
  <div class="a ser" style="left:999.5px;top:215px;width:281px;text-align:center;font-size:21.5px;line-height:30px">Гражданско-правовая<br>ответственность</div>
  <div class="a" style="left:26.5px;top:311.5px;width:316px;height:293px;border-radius:50px;background:#ff0000;border:2px solid #6b9a2c"></div>
  <div class="a" style="left:350px;top:309.5px;width:316px;height:293px;border-radius:50px;background:#ffc000;border:2px solid #6b9a2c"></div>
  <div class="a" style="left:670.5px;top:311.5px;width:316px;height:293px;border-radius:50px;background:#ffff00;border:2px solid #6b9a2c"></div>
  <div class="a" style="left:990px;top:309.5px;width:316px;height:293px;border-radius:50px;background:#9acd38;border:2px solid #6b9a2c"></div>
  <div class="a ser" style="left:51px;top:322px;width:290px;font-size:15px;line-height:20.4px;white-space:nowrap">Это ответственность за нарушение<br>законов, предусмотренных Уголовным<br>кодексом. Преступление<br>предусмотренное уголовным законом<br>общественно опасное, посягающее на<br>общественный строй, собственность,<br>личность, права и свободы граждан,<br>общественный порядок. (убийство,<br>грабёж, изнасилование, оскорбления,<br>мелкие хищения, хулиганство).<div style="height:13.6px"></div>За злостное хулиганство, кражу<br>уголовная ответственность наступает с<br>14 лет</div>
  <div class="a ser" style="left:375px;top:334px;width:290px;font-size:14.9px;line-height:20.4px;white-space:nowrap">Применяется за нарушения,<br>предусмотренные кодексом об<br>административных правонарушениях.<br>К административным нарушения<br>относятся: нарушение правил<br>дорожного движения,, нарушение<br>противопожарной безопасности. За<br>административные правонарушения к<br>ответственности привлекаются с 16<br>лет. Наказание: штраф,<br>предупреждение, исправительные<br>работы.</div>
  <div class="a ser" style="left:670.5px;top:326px;width:316px;text-align:center;font-size:24.2px;line-height:33.5px">это нарушение<br>трудовых обязанностей,<br>т.е. нарушение<br>трудового<br>законодательства, к<br>примеру: прогул без<br>уважительной<br>причины.</div>
  <div class="a ser" style="left:990px;top:370px;width:316px;text-align:center;font-size:24.2px;line-height:29px">регулирует<br>имущественные<br>отношения. Наказание<br>к правонарушителю:<br>возмещение вреда,<br>уплата ущерба.</div>
  <div class="a" style="left:0;top:673px;width:1288px;height:7px;background:#9acd38"></div>
  <div class="a" style="left:0;top:680px;width:1288px;height:49px;background:#63a537"></div>
</div>
<!-- NOTES -->
<div class="a" style="left:303px;top:957px;width:1617px;height:46px;background:#e6e6e6;border-top:1px solid #c6c6c6"></div>
<div class="a" style="left:317px;top:967px;font-size:18.2px;color:#555">Щелкните, чтобы добавить заметки</div>
<!-- STATUS -->
<div class="a" style="left:0;top:1003px;width:1920px;height:27px;background:#f3f2f1;border-top:1px solid #d6d6d6"></div>
<div class="a" style="left:10px;top:1009px;font-size:13px;color:#444">Слайд 4 из 8</div>
<div class="a" style="left:126px;top:1009px;font-size:13px;color:#444">русский</div>
<svg class="a" style="left:1377px;top:1007px" width="21" height="20" viewBox="0 0 21 20" fill="none" stroke="#555" stroke-width="1.2"><path d="M6 5l4.5-4 4.5 4M0 10h21M0 14h21M0 19h21"/></svg>
<div class="a" style="left:1399px;top:1009px;font-size:13px;color:#444">Заметки</div>
<div class="a" style="left:1471px;top:1004px;width:49px;height:26px;background:#c8c6c4"></div>
<svg class="a" style="left:1486px;top:1008px" width="20" height="18" viewBox="0 0 20 18" fill="none" stroke="#444" stroke-width="1.3"><rect x="1" y="1" width="18" height="16"/><path d="M4 1v16M4 13h15"/><rect x="7" y="4" width="8" height="5"/></svg>
<svg class="a" style="left:1537px;top:1009px" width="19" height="17" viewBox="0 0 19 17" fill="none" stroke="#555" stroke-width="1.3"><rect x="1" y="1" width="7" height="6"/><rect x="11" y="1" width="7" height="6"/><rect x="1" y="10" width="7" height="6"/><rect x="11" y="10" width="7" height="6"/></svg>
<svg class="a" style="left:1586px;top:1008px" width="19" height="18" viewBox="0 0 19 18" fill="none" stroke="#555" stroke-width="1.3"><path d="M1 2h7l1.5 1.5L11 2h7v15h-7l-1.5-1L8 17H1z"/><path d="M9.5 3.5v12M3 6h4M3 9h4M3 12h4M12 6h4M12 9h4M12 12h4"/></svg>
<svg class="a" style="left:1636px;top:1008px" width="18" height="18" viewBox="0 0 18 18" fill="none" stroke="#555" stroke-width="1.3"><path d="M0 1.5h18M2 1.5v9h14v-9M9 10.5v6M5 17h8"/></svg>
<div class="a" style="left:1677px;top:1016px;width:11px;height:1.3px;background:#555"></div>
<div class="a" style="left:1694px;top:1016px;width:124px;height:1px;background:#bbb"></div>
<div class="a" style="left:1756px;top:1012px;width:1px;height:9px;background:#bbb"></div>
<div class="a" style="left:1741px;top:1010px;width:6px;height:14px;background:#777"></div>
<svg class="a" style="left:1828px;top:1011px" width="11" height="11" stroke="#555" stroke-width="1.3"><path d="M5.5 0v11M0 5.5h11"/></svg>
<div class="a" style="left:1851px;top:1009px;font-size:13px;color:#555">81 %</div>
<svg class="a" style="left:1894px;top:1007px" width="19" height="20" viewBox="0 0 19 20" fill="none" stroke="#555" stroke-width="1.2"><rect x="5.5" y="6" width="8" height="8"/><path d="M7 3l2.5-2.5L12 3M7 17l2.5 2.5L12 17M3 7.5L0.5 10 3 12.5M16 7.5l2.5 2.5-2.5 2.5"/></svg>

<!-- TASKBAR -->
<div class="a" style="left:0;top:1030px;width:1920px;height:50px;background:#25313a"></div>
<svg class="a" style="left:19px;top:1044px" width="22" height="21" viewBox="0 0 22 21" fill="#fff"><path d="M0 3l9-1.3v8.3H0zM10 1.5L22 0v10H10zM0 11h9v8.3L0 18zM10 11h12v10l-12-1.6z"/></svg>
<div class="a" style="left:60px;top:1030px;width:430px;height:50px;background:#f2f2f2;border:1px solid #c6c6c6;border-bottom:none"></div>
<svg class="a" style="left:74px;top:1044px" width="22" height="22" viewBox="0 0 22 22" fill="none" stroke="#333" stroke-width="1.5"><circle cx="13" cy="9" r="7"/><path d="M8 14l-7 7"/></svg>
<div class="a" style="left:110px;top:1045px;font-size:18.2px;color:#333">Введите здесь текст для поиска</div>
<svg class="a" style="left:509px;top:1044px" width="22" height="21" viewBox="0 0 22 21" fill="none" stroke="#fff" stroke-width="1.5"><rect x="1" y="4" width="12" height="13"/><path d="M1 1h12M1 20h12M18 1v3M18 7v7M18 17v3"/></svg>
<!-- edge -->
<svg class="a" style="left:566px;top:1037px" width="34" height="34" viewBox="0 0 34 34"><defs><linearGradient id="eg" x1="0" y1="0" x2="1" y2="1"><stop offset="0" stop-color="#35c1f1"/><stop offset="0.5" stop-color="#51cf6e"/><stop offset="1" stop-color="#0c59a4"/></linearGradient></defs><circle cx="17" cy="17" r="15" fill="url(#eg)"/><path d="M9 17c0-5 4-8 9-8 5 0 8 3 8 6 0 2-2 3-5 3h-7c0 3 3 6 7 6 3 0 5-1 7-2-2 5-6 8-11 8C12 30 9 24 9 17z" fill="#0b5aa8"/><path d="M14 18h8c0-3-2-5-4-5s-4 2-4 5z" fill="#25313a" opacity=".3"/></svg>
<!-- folder -->
<svg class="a" style="left:630px;top:1040px" width="32" height="28" viewBox="0 0 32 28"><path d="M1 3h11l3 3h16v20H1z" fill="#e8b53a"/><path d="M1 9h30v17H1z" fill="#f7d46b"/><rect x="9" y="16" width="14" height="10" fill="#2d7fd3"/><rect x="12" y="20" width="8" height="6" fill="#f7d46b"/></svg>
<!-- mail -->
<svg class="a" style="left:691px;top:1040px" width="32" height="28" viewBox="0 0 32 28"><path d="M1 10L16 1l15 9v17H1z" fill="#1b6fc7"/><path d="M4 8h24v10H4z" fill="#fff"/><path d="M1 10l15 10 15-10v17H1z" fill="#35a5ee"/><path d="M1 27l15-9 15 9z" fill="#60c0f5"/></svg>
<!-- amazon -->
<div class="a" style="left:754px;top:1040px;width:31px;height:30px;background:#fff"></div>
<div class="a" style="left:754px;top:1036px;width:31px;text-align:center;font-size:24px;font-weight:bold;color:#111">a</div>
<svg class="a" style="left:758px;top:1059px" width="24" height="7" viewBox="0 0 24 7" fill="none" stroke="#f29d1b" stroke-width="1.8"><path d="M2 2c6 4 13 4 19 0M18 1l3 1-1 3"/></svg>
<!-- dropbox -->
<svg class="a" style="left:816px;top:1041px" width="31" height="27" viewBox="0 0 31 27" fill="#fff"><path d="M8 1l7.5 4.5L8 10 0.5 5.5zM23 1l7.5 4.5L23 10l-7.5-4.5zM8 11l7.5 4.5L8 20l-7.5-4.5zM23 11l7.5 4.5L23 20l-7.5-4.5zM8 21.5l7.5-4.5 7.5 4.5-7.5 4.5z"/></svg>
<!-- s icon -->
<svg class="a" style="left:884px;top:1039px" width="19" height="32" viewBox="0 0 19 32" fill="#fff"><path d="M15.5 1L9 9.5l2 1.5z"/><path d="M2.5 14.5L8 9.5l9 11-5.5 5z"/><path d="M11.5 25.5L4 31l4.5-8z"/></svg>
<!-- powerpoint active -->
<div class="a" style="left:926px;top:1030px;width:61px;height:50px;background:#4f5a60"></div>
<div class="a" style="left:926px;top:1077px;width:61px;height:3px;background:#76b9ed"></div>
<svg class="a" style="left:938px;top:1039px" width="34" height="32" viewBox="0 0 34 32"><circle cx="20" cy="16" r="13.5" fill="#ed6c47"/><path d="M20 2.5a13.5 13.5 0 0 1 13.5 13.5H20z" fill="#ff8f6b"/><path d="M20 16h13.5a13.5 13.5 0 0 1-13.5 13.5z" fill="#d35230"/><rect x="3" y="8.5" width="15.5" height="15.5" rx="1.5" fill="#c43e1c"/><text x="6.3" y="21" font-size="11.5" font-weight="bold" fill="#fff" font-family="Liberation Sans">P</text></svg>
<!-- word -->
<svg class="a" style="left:1000px;top:1040px" width="34" height="30" viewBox="0 0 34 30"><rect x="8" y="1" width="25" height="28" rx="2" fill="#2b7cd3"/><rect x="8" y="8" width="25" height="7" fill="#41a5ee"/><rect x="8" y="22" width="25" height="7" fill="#185abd"/><rect x="1" y="7" width="18" height="17" rx="2" fill="#185abd"/><text x="3" y="20.5" font-size="12" font-weight="bold" fill="#fff" font-family="Liberation Sans">W</text></svg>
<!-- zoom -->
<svg class="a" style="left:1063px;top:1040px" width="32" height="30" viewBox="0 0 32 30"><rect x="1" y="0" width="30" height="30" rx="9" fill="#2d8cff"/><rect x="7" y="10" width="13" height="10" rx="2" fill="#fff"/><path d="M20 13l6-4v12l-6-4z" fill="#fff"/></svg>
<!-- underlines -->
<div class="a" style="left:559px;top:1077px;width:50px;height:3px;background:#76b9ed"></div>
<div class="a" style="left:621px;top:1077px;width:50px;height:3px;background:#76b9ed"></div>
<div class="a" style="left:994px;top:1077px;width:50px;height:3px;background:#76b9ed"></div>
<div class="a" style="left:1056px;top:1077px;width:50px;height:3px;background:#76b9ed"></div>
<!-- tray -->
<svg class="a" style="left:1508px;top:1041px" width="32" height="32" viewBox="0 0 32 32"><circle cx="14" cy="14" r="12.5" fill="#1e90e0" stroke="#fff" stroke-width="2"/><text x="7.5" y="21.5" font-size="19" font-weight="bold" fill="#fff" font-family="Liberation Sans">?</text><circle cx="23.5" cy="23" r="6.5" fill="#1e90e0"/><rect x="22.5" y="21.5" width="2" height="6" fill="#fff"/><circle cx="23.5" cy="19" r="1.1" fill="#fff"/></svg>
<svg class="a" style="left:1549px;top:1048px" width="18" height="10" viewBox="0 0 18 10" fill="none" stroke="#fff" stroke-width="1.4"><path d="M1 9l8-8 8 8"/></svg>
<svg class="a" style="left:1576px;top:1045px" width="24" height="15" viewBox="0 0 24 15"><path d="M5 14a4.5 4.5 0 0 1 0-9 6.5 6.5 0 0 1 12-1.5A5 5 0 0 1 19 14z" fill="#d0d0d0"/></svg>
<svg class="a" style="left:1610px;top:1042px" width="14" height="24" viewBox="0 0 14 24" fill="none" stroke="#fff" stroke-width="1.5"><rect x="4" y="1" width="6" height="13" rx="3" fill="#fff"/><path d="M1 10c0 4 3 6 6 6s6-2 6-6M7 16v5M3 22h8"/></svg>
<svg class="a" style="left:1636px;top:1044px" width="26" height="18" viewBox="0 0 26 18" fill="none" stroke="#fff" stroke-width="1.4"><rect x="6" y="5" width="17" height="10"/><rect x="8" y="7" width="6" height="6" fill="#fff"/><path d="M23 8h2v4h-2M1 3h5M3.5 0.5v5"/></svg>
<svg class="a" style="left:1669px;top:1043px" width="24" height="22" viewBox="0 0 24 22" fill="none" stroke="#fff" stroke-width="1.5"><path d="M2 20a20 20 0 0 1 20-18M6 20a16 16 0 0 1 16-14M10 20a12 12 0 0 1 12-10M14 20a8 8 0 0 1 8-6"/><circle cx="21" cy="19" r="1.5" fill="#fff"/></svg>
<svg class="a" style="left:1697px;top:1043px" width="24" height="22" viewBox="0 0 24 22" fill="none" stroke="#fff" stroke-width="1.4"><path d="M1 7h4l6-5v18l-6-5H1z"/><path d="M15 7c2 2 2 6 0 8M18 4c4 4 4 10 0 14"/></svg>
<div class="a" style="left:1731px;top:1044px;font-size:18px;color:#fff">ҚАЗ</div>
<div class="a" style="left:1771px;top:1033px;width:80px;text-align:center;font-size:15.5px;color:#fff;line-height:22px;transform:scaleX(0.9)">9:16<br>27.10.2020</div><div class="a" style="left:1915px;top:1030px;width:1px;height:50px;background:#5a646a"></div>
<svg class="a" style="left:1868px;top:1040px" width="32" height="32" viewBox="0 0 32 32" fill="none"><path d="M2 2h22v16H10l-5 5v-5H2z" stroke="#fff" stroke-width="1.5" fill="#25313a"/><path d="M6 7h14M6 11h14" stroke="#fff" stroke-width="1.3"/><circle cx="21" cy="22" r="8" fill="#25313a" stroke="#fff" stroke-width="1.3"/><text x="17.5" y="27" font-size="13" fill="#fff" font-family="Liberation Sans">1</text></svg>

<!-- ZOOM PANEL -->
<div class="a" style="left:1898px;top:203px;width:22px;height:754px;background:#dcdcdc"></div>
<div class="a" style="left:1900px;top:204px;width:18px;height:18px;background:#fff;border:1px solid #c8c8c8"></div>
<svg class="a" style="left:1903px;top:210px" width="11" height="6"><path d="M0 6h11L5.5 0z" fill="#666"/></svg>
<div class="a" style="left:1900px;top:445px;width:18px;height:100px;background:#fff;border:1px solid #b8b8b8"></div>
<div class="a" style="left:1900px;top:871px;width:18px;height:18px;background:#fff;border:1px solid #c8c8c8"></div>
<svg class="a" style="left:1903px;top:877px" width="11" height="6"><path d="M0 0h11L5.5 6z" fill="#666"/></svg>
<svg class="a" style="left:1903px;top:894px" width="11" height="12" viewBox="0 0 11 12" fill="#777"><path d="M0 6h11L5.5 0zM0 12h11L5.5 6z"/></svg>
<svg class="a" style="left:1903px;top:916px" width="11" height="12" viewBox="0 0 11 12" fill="#777"><path d="M0 0h11L5.5 6zM0 6h11L5.5 12z"/></svg>
<div id="zoom" class="a" style="left:1605px;top:171px;width:288px;height:809px;background:#1c1c1e;box-shadow:0 5px 12px rgba(0,0,0,.35);border-radius:2px"></div>
<div class="a" style="left:1609px;top:175px;width:280px;height:802px;background:#232323"></div>
<!-- tile1 -->
<svg class="a" style="left:1609px;top:175px" width="281" height="158" viewBox="0 0 281 158">
  <defs>
    <linearGradient id="wall1" x1="0" y1="0" x2="1" y2="0"><stop offset="0" stop-color="#e6e4cf"/><stop offset="0.75" stop-color="#ebe9d1"/><stop offset="1" stop-color="#d3e3de"/></linearGradient>
    <filter id="b1" x="-20%" y="-20%" width="140%" height="140%"><feGaussianBlur stdDeviation="1.3"/></filter>
    <filter id="b05"><feGaussianBlur stdDeviation="0.5"/></filter>
  </defs>
  <rect width="281" height="158" fill="url(#wall1)"/>
  <g filter="url(#b1)">
    <path d="M226 140 l55 -6 v24 h-55z" fill="#a8664c"/>
    <rect x="228" y="147" width="53" height="5" fill="#e4e2e2"/>
    <path d="M40 160 C45 122 70 100 102 94 L104 160z" fill="#e9dde8"/>
    <path d="M204 110 C222 114 234 134 238 160 L204 160z" fill="#e9dde8"/>
    <path d="M117 15 C125 2 140 -3 160 -3 C178 -3 190 5 197 30 C202 60 201 100 204 130 L210 160 L98 160 C100 130 102 100 104 80 C106 50 110 25 117 15z" fill="#2a1f22"/>
    <path d="M134 98 L178 98 L170 160 L138 160z" fill="#d7a39c"/>
    <path d="M128 22 C135 5 150 1 160 2 C175 2 186 12 190 30 C194 50 193 70 190 80 C185 95 175 106 160 108 C145 107 132 98 126 80 C121 65 121 40 128 22z" fill="#dca89f"/>
    <path d="M104 78 C110 100 122 114 135 118 L141 160 L98 160z" fill="#2a1f22"/>
    <path d="M193 66 C189 85 181 100 174 104 L168 160 L210 160 L204 130z" fill="#2a1f22"/>
    <ellipse cx="158" cy="84" rx="11" ry="4.5" fill="#c98282"/>
    <path d="M155 50 L152 66 L162 67z" fill="#c99088" opacity=".6"/>
  </g>
  <g fill="none" stroke="#1b1517" stroke-width="2.8" filter="url(#b05)">
    <path d="M119 37 h47 l1 4 c-1 10 -3 17 -12 17 h-24 c-8 0 -10 -6 -12 -21z"/>
    <path d="M168 37 h33 l-1 4 c-1 12 -4 18 -12 18 h-12 c-6 0 -8 -6 -8 -22z"/>
  </g>
  <ellipse cx="140" cy="45" rx="6" ry="2.2" fill="#5a3a3a" opacity=".55"/>
  <ellipse cx="182" cy="45" rx="6" ry="2.2" fill="#5a3a3a" opacity=".55"/>
  <path d="M130 28 q10 -4 20 0 M170 28 q10 -4 18 1" stroke="#7a5050" stroke-width="1.2" fill="none" opacity=".5"/>
  <rect x="0" y="134" width="172" height="24" fill="rgba(45,43,43,0.72)"/>
</svg>
<div class="a" style="left:1614px;top:312px;font-size:15.3px;color:#fff;white-space:nowrap">Гульжан Нурынбетова</div>
<div class="a" style="left:1609px;top:333px;width:280px;height:3px;background:#1a1a1a"></div>
<!-- tile2 -->
<svg class="a" style="left:1689px;top:336px" width="119" height="158" viewBox="0 0 119 158">
  <defs>
    <filter id="b2"><feGaussianBlur stdDeviation="1.4"/></filter>
    <filter id="noise"><feTurbulence type="fractalNoise" baseFrequency="0.45" numOctaves="2" seed="5"/><feColorMatrix type="matrix" values="0 0 0 0 0.66  0 0 0 0 0.68  0 0 0 0 0.64  1.1 0 0 0 -0.3"/></filter>
    <linearGradient id="ceil2" x1="0" y1="0" x2="0" y2="1"><stop offset="0" stop-color="#cdd3ce"/><stop offset="1" stop-color="#aab4ae"/></linearGradient>
  </defs>
  <rect width="119" height="158" fill="#717d7a"/>
  <rect width="119" height="158" filter="url(#noise)"/>
  <rect width="119" height="11" fill="url(#ceil2)"/>
  <g filter="url(#b2)">
    <path d="M0 118 C15 112 35 112 52 118 L90 118 C100 112 112 112 119 116 V158 H0z" fill="#b24e58"/>
    <path d="M54 122 h36 l-2 36 h-32z" fill="#d2aca2"/>
    <path d="M27 40 C30 22 45 12 75 10 C98 10 112 25 114 46 L110 70 L30 70z" fill="#8e8275"/>
    <path d="M36 36 C50 30 80 32 102 44 C108 55 108 80 106 92 C102 115 88 132 66 133 C46 132 36 115 33 92 C31 70 31 50 36 36z" fill="#d6b5a9"/>
    <path d="M106 70 C112 70 115 80 112 95 L106 98z" fill="#d49a98"/>
    <ellipse cx="100" cy="56" rx="9" ry="14" fill="#f2e7e2"/>
    <path d="M30 40 C45 24 90 22 108 40 L106 50 C90 36 50 34 32 54z" fill="#8e8275"/>
    <ellipse cx="49" cy="79" rx="7" ry="2.5" fill="#6a4e48"/>
    <ellipse cx="89" cy="79" rx="7" ry="2.5" fill="#8a6e68"/>
    <ellipse cx="68" cy="118" rx="10" ry="3" fill="#b88a86"/>
    <ellipse cx="70" cy="100" rx="6" ry="4" fill="#e6cbc2"/>
  </g>
</svg>
<div class="a" style="left:1609px;top:469px;width:132px;height:25px;background:rgba(45,43,43,0.72)"></div>
<svg class="a" style="left:1616px;top:474px" width="15" height="16" viewBox="0 0 15 16" fill="none" stroke="#e8504a" stroke-width="1.6"><rect x="5" y="1" width="5" height="9" rx="2.5" fill="#e8504a"/><path d="M2 7c0 4 3 5 5.5 5S13 11 13 7M7.5 12v3M1 15L14 1"/></svg>
<div class="a" style="left:1637px;top:473px;font-size:15.3px;color:#fff;white-space:nowrap">Руслан Риман</div>
<!-- tile3 -->
<div class="a" style="left:1608px;top:496px;width:282px;height:160px;border:1px solid #7cb518"></div>
<svg class="a" style="left:1689px;top:497px" width="119" height="158" viewBox="0 0 119 158">
  <defs><filter id="b3"><feGaussianBlur stdDeviation="2"/></filter></defs>
  <rect width="119" height="158" fill="#c9a56a"/>
  <g filter="url(#b3)">
    <rect x="0" y="0" width="92" height="12" fill="#cfc7d6"/>
    <rect x="0" y="11" width="90" height="36" fill="#d8c088"/>
    <rect x="0" y="22" width="52" height="24" fill="#e2dada"/>
    <rect x="0" y="45" width="40" height="20" fill="#d2b67a"/>
    <rect x="89" y="0" width="30" height="158" fill="#b5854f"/>
    <path d="M0 68 C20 52 55 46 90 46 L90 140 C65 142 30 140 0 132z" fill="#6e5646"/>
    <path d="M52 46 C68 44 84 46 90 50 L90 112 C80 118 66 114 58 100z" fill="#262020"/>
    <ellipse cx="22" cy="96" rx="30" ry="26" fill="#d9ab9c"/>
    <path d="M57 158 C57 140 66 130 76 132 C86 134 90 146 90 158z" fill="#e9c6b0"/>
    <rect x="0" y="131" width="56" height="27" fill="#4a484c"/>
  </g>
  <g fill="#ddd" opacity=".5"><rect x="72" y="62" width="2" height="30"/><rect x="79" y="68" width="2" height="28"/></g>
</svg>
<div class="a" style="left:1609px;top:630px;width:136px;height:25px;background:rgba(45,43,43,0.72)"></div>
<div class="a" style="left:1614px;top:634px;font-size:15.3px;color:#fff;white-space:nowrap">Оксана Утегенова</div>
<!-- tile4 -->
<svg class="a" style="left:1689px;top:657px" width="119" height="159" viewBox="0 0 119 159">
  <defs><filter id="b4"><feGaussianBlur stdDeviation="1.8"/></filter></defs>
  <rect width="119" height="159" fill="#1f2a37"/>
  <g filter="url(#b4)">
    <rect x="0" y="0" width="119" height="52" fill="#223044"/>
    <rect x="0" y="53" width="119" height="52" fill="#33182a"/>
    <rect x="0" y="46" width="9" height="34" fill="#2a4058"/>
    <rect x="110" y="42" width="9" height="50" fill="#4a4a52"/>
    <ellipse cx="52" cy="24" rx="9" ry="6" fill="#0e1014"/>
    <path d="M34 118 C30 82 36 46 57 44 C78 46 84 82 80 120z" fill="#c9b088"/>
    <ellipse cx="58" cy="75" rx="14" ry="19" fill="#dcc2b8"/>
    <path d="M0 122 C12 104 32 98 58 100 C85 98 104 106 119 118 V159 H0z" fill="#d4d3d6"/>
    <path d="M0 130 C8 116 20 111 30 114 L25 159 H0z" fill="#e8e8ea"/>
    <rect x="14" y="145" width="84" height="14" fill="#9c5c46"/>
  </g>
  <path d="M38 136 l9 -3 M50 133 l5 3 M72 130 c-4 4 2 8 -1 12" stroke="#333" stroke-width="1.4" fill="none"/>
</svg>
<div class="a" style="left:1609px;top:790px;width:37px;height:25px;background:rgba(45,43,43,0.72)"></div>
<div class="a" style="left:1614px;top:794px;font-size:15.3px;color:#fff;white-space:nowrap">АнЯ</div>
<!-- tile5 -->
<div class="a" style="left:1609px;top:884px;width:280px;text-align:center;font-size:23.5px;font-weight:bold;color:#fff;letter-spacing:0.3px">Австриевских...</div>
<!-- main scrollbar -->

</body></html>
